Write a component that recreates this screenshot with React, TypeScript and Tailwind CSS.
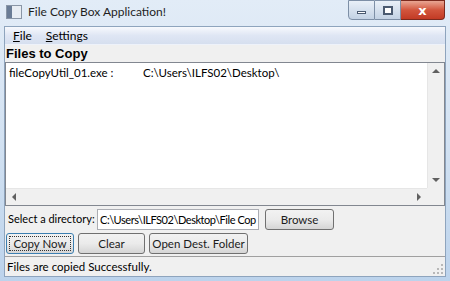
import React from "react";

const ui = { fontFamily: 'Lato, "Noto Sans", sans-serif' };

function CaptionButtons() {
  return (
    <div className="flex h-[20px] self-start mr-[5px]">
      <div className="w-[27px] h-[20px] border border-[#7d8fa6] rounded-bl-[4px] bg-gradient-to-b from-[#e9f0f8] to-[#c3d2e4] flex items-center justify-center">
        <div className="w-[9px] h-[3px] bg-white border border-[#4a5a70] mt-[5px]" />
      </div>
      <div className="w-[26px] h-[20px] border-y border-r border-[#7d8fa6] bg-gradient-to-b from-[#e9f0f8] to-[#c3d2e4] flex items-center justify-center">
        <div className="w-[10px] h-[9px] border-2 border-[#4a5a70] bg-white" />
      </div>
      <div className="w-[44px] h-[20px] border-y border-r border-[#7b2a1e] rounded-br-[4px] bg-gradient-to-b from-[#e8a593] via-[#d2553d] to-[#c23a24] flex items-center justify-center">
        <span className="text-white text-[13px] font-bold leading-none" style={{ fontFamily: '"DejaVu Sans", sans-serif' }}>x</span>
      </div>
    </div>
  );
}

function Btn({ label, w, focused }: { label: string; w: string; focused?: boolean }) {
  return (
    <div
      className={`${w} h-[21px] rounded-[3px] border ${focused ? "border-[#3c7fb1]" : "border-[#707070]"} bg-gradient-to-b from-[#f2f2f2] via-[#ebebeb] to-[#d5d5d5] flex items-center justify-center p-[2px]`}
    >
      <div className={`w-full h-full flex items-center justify-center whitespace-nowrap text-[11.5px] text-[#1b1b1b] ${focused ? "border border-dotted border-[#333]" : ""}`}>
        {label}
      </div>
    </div>
  );
}

export default function App() {
  return (
    <div className="w-[450px] h-[281px] flex flex-col bg-gradient-to-b from-[#e2ecf7] via-[#d3e2f2] to-[#bcd3ec] overflow-hidden" style={ui}>
      {/* title bar */}
      <div className="h-[26px] flex items-start justify-between shrink-0">
        <div className="flex items-center gap-[6px] pl-[6px] pt-[5px]">
          <div className="w-[16px] h-[14px] border border-[#8a96a6] bg-[#e8edf3] flex">
            <div className="w-[5px] h-full bg-[#6a7c95]" />
          </div>
          <span className="text-[12px] text-[#1e1e1e] leading-none whitespace-nowrap">File Copy Box Application!</span>
        </div>
        <CaptionButtons />
      </div>

      {/* client */}
      <div className="mx-[4px] flex-1 flex flex-col bg-[#f0f0f0] border border-[#8ea4bd] min-h-0">
        {/* menu */}
        <div className="h-[18px] shrink-0 flex items-center gap-[14px] pl-[8px] bg-gradient-to-b from-[#f7f9fd] via-[#dfe6f4] to-[#d6dfef] border-b border-[#eef2fa] text-[12px] text-black">
          <span><u>F</u>ile</span>
          <span><u>S</u>ettings</span>
        </div>
        {/* label */}
        <div className="h-[17px] shrink-0 pl-[1px] text-[13px] font-bold leading-[17px] text-black" style={{ fontFamily: '"Liberation Sans", Arial, sans-serif' }}>
          Files to Copy
        </div>
        {/* list */}
        <div className="h-[144px] shrink-0 border border-[#828790] bg-white flex flex-col">
          <div className="flex-1 flex min-h-0">
            <div className="flex-1 pl-[3px] pt-[1px] text-[11.5px] text-black flex whitespace-nowrap">
              <span className="w-[134px]">fileCopyUtil_01.exe :</span>
              <span>C:\Users\ILFS02\Desktop\</span>
            </div>
            <div className="w-[17px] bg-[#f0f0f0] border-l border-[#e6e6e6] flex flex-col justify-between items-center py-[6px]">
              <div className="w-0 h-0 border-x-[4px] border-x-transparent border-b-[4px] border-b-[#606060]" />
              <div className="w-0 h-0 border-x-[4px] border-x-transparent border-t-[4px] border-t-[#606060]" />
            </div>
          </div>
          <div className="h-[17px] flex">
            <div className="flex-1 bg-[#f0f0f0] border-t border-[#e6e6e6] flex justify-between items-center px-[6px]">
              <div className="w-0 h-0 border-y-[4px] border-y-transparent border-r-[4px] border-r-[#606060]" />
              <div className="w-0 h-0 border-y-[4px] border-y-transparent border-l-[4px] border-l-[#606060]" />
            </div>
            <div className="w-[17px] bg-[#f0f0f0]" />
          </div>
        </div>
        {/* directory row */}
        <div className="h-[23px] mt-[2px] shrink-0 flex items-center pl-[3px] text-[11.5px] text-black">
          <span className="w-[89px] shrink-0 whitespace-nowrap text-[11px]">Select a directory:</span>
          <div className="w-[162px] h-[21px] shrink-0 border border-[#abadb3] bg-white pl-[2px] text-[11px] tracking-[-0.45px] leading-[19px] overflow-hidden whitespace-nowrap">
            C:\Users\ILFS02\Desktop\File Cop
          </div>
          <div className="ml-[6px]">
            <Btn label="Browse" w="w-[69px]" />
          </div>
        </div>
        {/* buttons */}
        <div className="h-[23px] mt-[1px] shrink-0 flex items-center gap-[4px] pl-[1px]">
          <Btn label="Copy Now" w="w-[68px]" focused />
          <Btn label="Clear" w="w-[67px]" />
          <Btn label="Open Dest. Folder" w="w-[99px]" />
        </div>
        {/* status */}
        <div className="flex-1 mt-[1px] border-t border-[#a0a0a0] flex items-center justify-between pl-[2px] text-[11.5px] text-black">
          <span className="whitespace-nowrap">Files are copied Successfully.</span>
          <svg width="11" height="11" viewBox="0 0 11 11" className="self-end mb-[1px] mr-[1px]">
            {[[8, 0], [8, 4], [4, 4], [8, 8], [4, 8], [0, 8]].map(([x, y], i) => (
              <rect key={i} x={x} y={y} width="2" height="2" fill="#b8b8b8" />
            ))}
          </svg>
        </div>
      </div>
      <div className="h-[4px] shrink-0" />
    </div>
  );
}
